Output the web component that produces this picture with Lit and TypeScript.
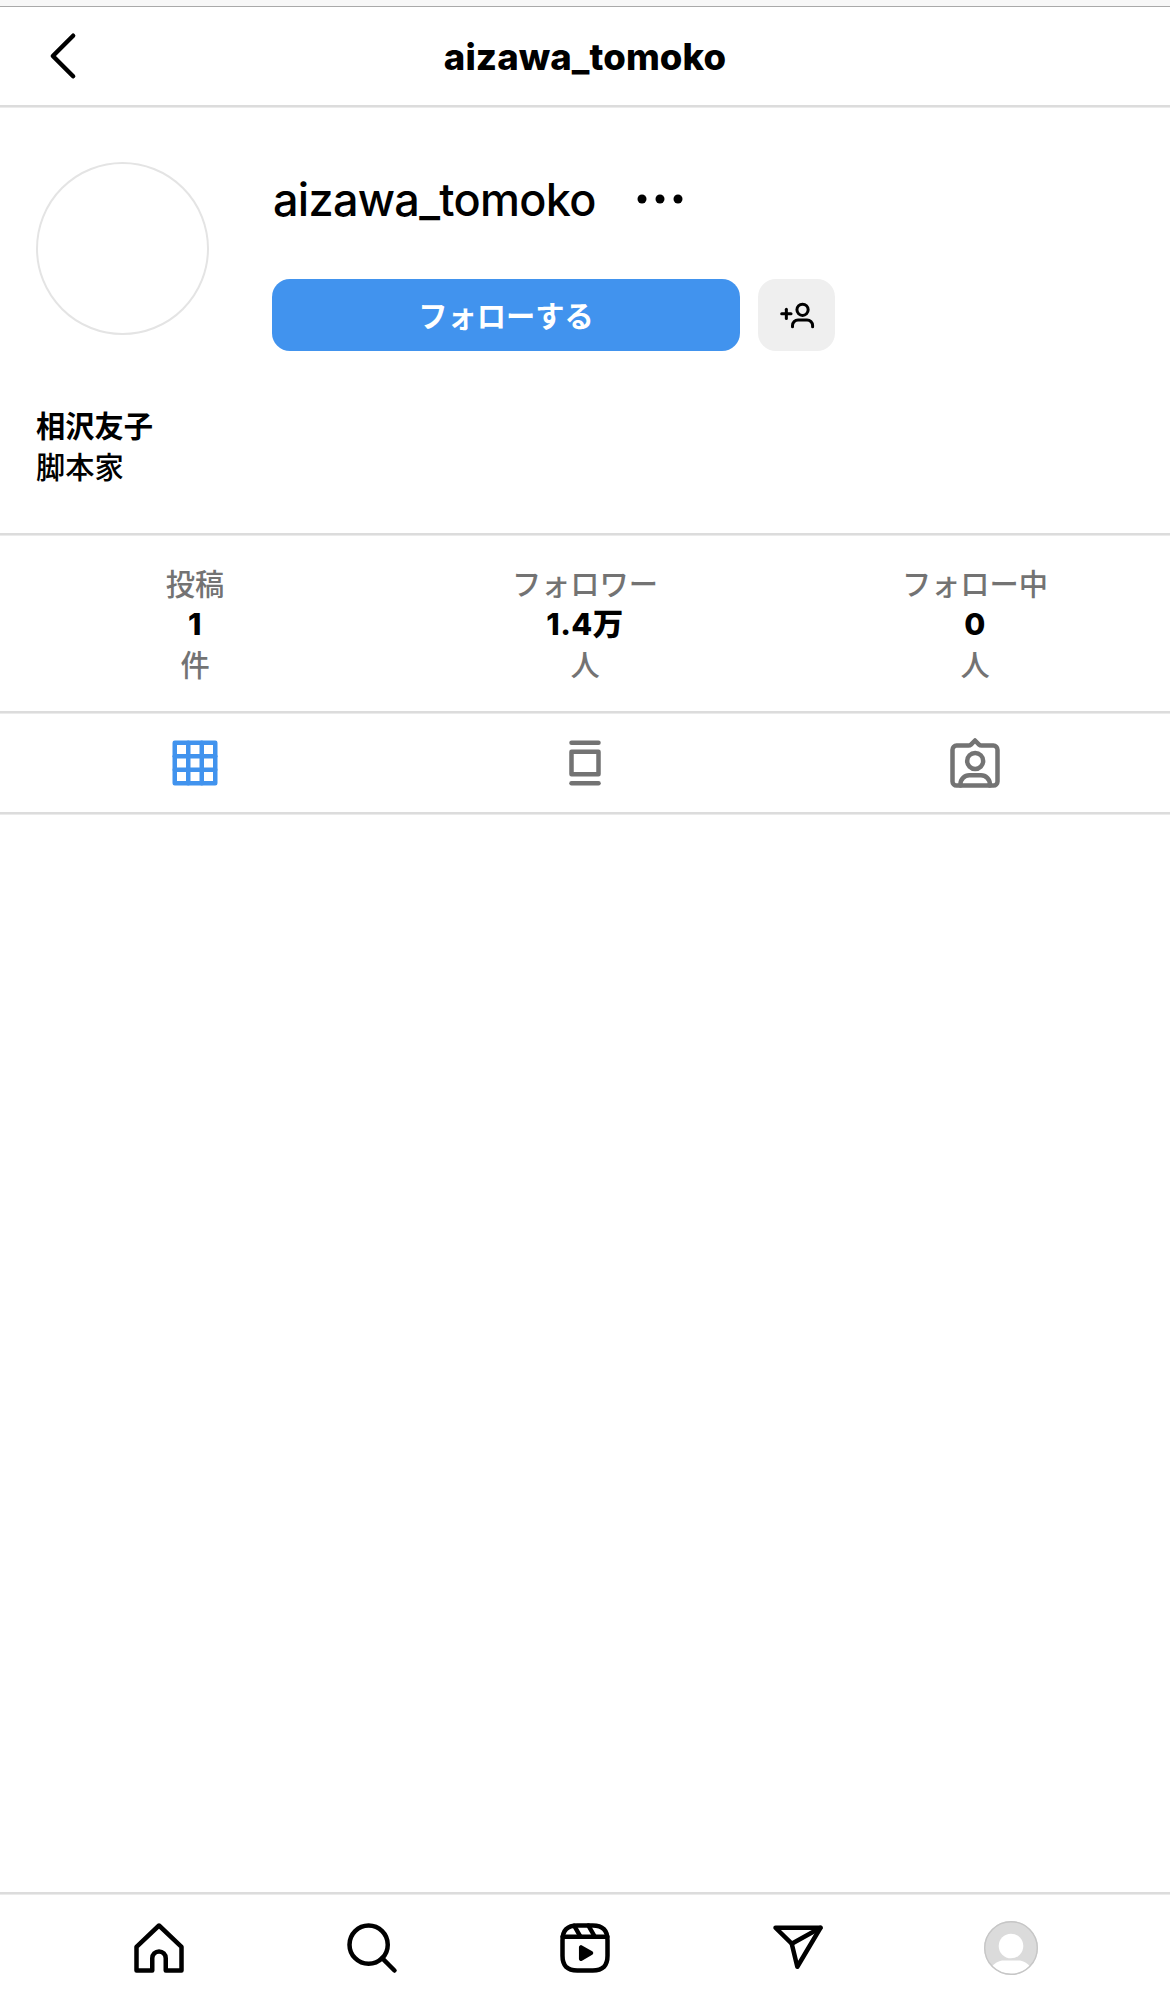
import { LitElement, html, css, svg } from "lit";
import { customElement } from "lit/decorators.js";

const line = (x1: number, y1: number, x2: number, y2: number) =>
  svg`<line x1=${x1} y1=${y1} x2=${x2} y2=${y2}></line>`;

const icons = {
  back: svg`<polyline points="16.502 21 7.498 12 16.502 3"></polyline>`,
  grid: svg`<rect x="3" y="3" width="18" height="18"></rect>
    ${line(9, 3, 9, 21)}${line(15, 3, 15, 21)}${line(21, 9, 3, 9)}${line(21, 15, 3, 15)}`,
  feed: svg`<rect x="6" y="7" width="12" height="10"></rect>${line(6, 3, 18, 3)}${line(6, 21, 18, 21)}`,
  tagged: svg`<path d="M10.201 3.797 12 1.997l1.799 1.8a1.59 1.59 0 0 0 1.124.465h5.259A1.818 1.818 0 0 1 22 6.08v14.104a1.818 1.818 0 0 1-1.818 1.818H3.818A1.818 1.818 0 0 1 2 20.184V6.08a1.818 1.818 0 0 1 1.818-1.818h5.26a1.59 1.59 0 0 0 1.123-.465Z"></path>
    <path d="M18.598 22.002V21.4a3.949 3.949 0 0 0-3.948-3.949H9.495A3.949 3.949 0 0 0 5.546 21.4v.603"></path>
    <circle cx="12.072" cy="11.075" r="3.556"></circle>`,
  home: svg`<path d="M9.005 16.545a2.997 2.997 0 0 1 2.997-2.997A2.997 2.997 0 0 1 15 16.545V22h7V11.543L12 2 2 11.543V22h7.005Z"></path>`,
  search: svg`<path d="M19 10.5A8.5 8.5 0 1 1 10.5 2a8.5 8.5 0 0 1 8.5 8.5Z"></path>${line(16.511, 16.511, 22, 22)}`,
  reels: svg`${line(2.049, 7.002, 21.95, 7.002)}${line(13.504, 2.001, 16.362, 7.002)}${line(7.207, 2.11, 10.002, 7.002)}
    <path d="M2 12.001v3.449c0 2.849.698 4.006 1.606 4.945.94.908 2.098 1.607 4.946 1.607h6.896c2.848 0 4.006-.699 4.946-1.607.908-.939 1.606-2.096 1.606-4.945V8.552c0-2.848-.698-4.006-1.606-4.945C19.454 2.699 18.296 2 15.448 2H8.552c-2.848 0-4.006.699-4.946 1.607C2.698 4.546 2 5.704 2 8.552Z"></path>
    <path class="solid" d="M9.763 17.664a.908.908 0 0 1-.454-.787V11.63a.909.909 0 0 1 1.364-.788l4.545 2.624a.909.909 0 0 1 0 1.575l-4.545 2.624a.91.91 0 0 1-.91 0Z"></path>`,
  send: svg`${line(22, 3, 9.218, 10.083)}<polygon points="11.698 20.334 22 3.001 2 3.001 9.218 10.084 11.698 20.334"></polygon>`,
  addUser: svg`<circle cx="15.7" cy="8.5" r="3.75"></circle>
    <path d="M9 19.9v-.9a3.7 3.7 0 0 1 3.7-3.7h6a3.7 3.7 0 0 1 3.7 3.7v.9"></path>
    ${line(4.9, 8.1, 4.9, 14.3)}${line(1.8, 11.2, 8, 11.2)}`,
  more: svg`<circle class="solid" cx="4" cy="12" r="2"></circle><circle class="solid" cx="12" cy="12" r="2"></circle><circle class="solid" cx="20" cy="12" r="2"></circle>`,
};

const icon = (name: keyof typeof icons, extra = "") =>
  html`<svg class="icon ${extra}" viewBox="0 0 24 24">${icons[name]}</svg>`;

const stats = [
  { label: "投稿", value: "1", unit: "件" },
  { label: "フォロワー", value: "1.4万", unit: "人" },
  { label: "フォロー中", value: "0", unit: "人" },
];

@customElement("app-root")
export class AppRoot extends LitElement {
  static styles = css`
    :host {
      display: flex;
      flex-direction: column;
      height: 1995px;
      background: #fff;
      color: #000;
      font-family: Inter, "Noto Sans CJK JP", sans-serif;
      font-size: 29.25px;
      line-height: 40.5px;
      overflow: hidden;
    }
    * { box-sizing: border-box; }
    .icon {
      display: block;
      width: 54px;
      height: 54px;
      fill: none;
      stroke: currentColor;
      stroke-width: 2;
      stroke-linecap: round;
      stroke-linejoin: round;
      overflow: visible;
      flex: none;
    }
    .solid { fill: currentColor; stroke: none; }
    .strip { height: 7px; background: #f7f7f7; border-bottom: 1px solid #a9a9a9; flex: none; }
    .rule { height: 3px; flex: none; background: linear-gradient(#dcdcdc 0 2px, #ebebeb 2px 3px); }
    header {
      height: 98px;
      flex: none;
      display: grid;
      grid-template-columns: 1fr auto 1fr;
      align-items: center;
      padding: 0 36px;
    }
    h1 { margin: 0; padding-top: 2px; font-size: 36.5px; font-weight: 800; line-height: 44px; letter-spacing: 0.1px; }
    .profile { display: flex; gap: 63px; padding: 54px 36px 0; height: 297px; flex: none; }
    .avatar { width: 173px; height: 173px; border: 2px solid #e4e4e4; border-radius: 50%; flex: none; }
    .details { display: flex; flex-direction: column; }
    .name-row { display: flex; align-items: center; height: 74px; gap: 37px; }
    h2 { margin: 0; padding: 1px 0 0 1px; font-size: 45px; font-weight: 500; line-height: 54px; letter-spacing: -0.7px; }
    .actions { display: flex; gap: 18px; margin-top: 43px; }
    button {
      border: 0;
      padding: 0;
      height: 72px;
      border-radius: 18px;
      font: inherit;
      display: flex;
      align-items: center;
      justify-content: center;
    }
    .follow { width: 468px; padding-top: 4px; background: #4193ee; color: #fff; font-weight: 700; }
    .suggest { width: 77px; background: #efefef; color: #000; }
    .small { width: 36px; height: 36px; }
    .more { width: 54px; height: 54px; }
    .bio { padding: 2px 36px 0; height: 128px; flex: none; }
    .bio p { margin: 0; }
    .bio .full-name { font-weight: 700; }
    .bio .role { font-weight: 500; }
    .stats { display: grid; grid-template-columns: repeat(3, 1fr); height: 175px; padding-top: 29px; flex: none; text-align: center; }
    .stat { display: flex; flex-direction: column; color: #737373; font-weight: 500; }
    .value { margin: -2px 0 2px; color: #000; font-size: 30.5px; font-weight: 800; letter-spacing: 0.4px; }
    .tabs { display: grid; grid-template-columns: repeat(3, 1fr); height: 98px; flex: none; place-items: center; color: #737373; }
    .active { color: #4193ee; }
    .posts { flex: 1; }
    nav { display: grid; grid-template-columns: repeat(5, 213px); justify-content: center; height: 100px; padding-top: 26px; justify-items: center; flex: none; }
    .me { display: block; width: 54px; height: 54px; }
  `;

  render() {
    return html`
      <div class="strip"></div>
      <header>${icon("back")}<h1>aizawa_tomoko</h1></header>
      <div class="rule"></div>
      <section class="profile">
        <div class="avatar"></div>
        <div class="details">
          <div class="name-row"><h2>aizawa_tomoko</h2>${icon("more", "more")}</div>
          <div class="actions">
            <button class="follow">フォローする</button>
            <button class="suggest">${icon("addUser", "small")}</button>
          </div>
        </div>
      </section>
      <section class="bio">
        <p class="full-name">相沢友子</p>
        <p class="role">脚本家</p>
      </section>
      <div class="rule"></div>
      <section class="stats">
        ${stats.map(
          (s) => html`<div class="stat"><span>${s.label}</span><span class="value">${s.value}</span><span>${s.unit}</span></div>`
        )}
      </section>
      <div class="rule"></div>
      <section class="tabs">${icon("grid", "active")}${icon("feed")}${icon("tagged")}</section>
      <div class="rule"></div>
      <main class="posts"></main>
      <div class="rule"></div>
      <nav>
        ${icon("home")}${icon("search")}${icon("reels")}${icon("send")}
        <svg class="me" viewBox="0 0 54 54">
          <defs><clipPath id="disc"><circle cx="27" cy="27" r="26"></circle></clipPath></defs>
          <circle cx="27" cy="27" r="27" fill="#dbdbdb"></circle>
          <g clip-path="url(#disc)" fill="#fff">
            <circle cx="27" cy="25" r="12.3"></circle>
            <path d="M5 50C9 42 15 39.500 20 39.500H34C39 39.500 45 42 49 50V54H5Z"></path>
          </g>
          <circle cx="27" cy="27" r="26.300" fill="none" stroke="#c6c6c6" stroke-width="1.400"></circle>
        </svg>
      </nav>
    `;
  }
}
